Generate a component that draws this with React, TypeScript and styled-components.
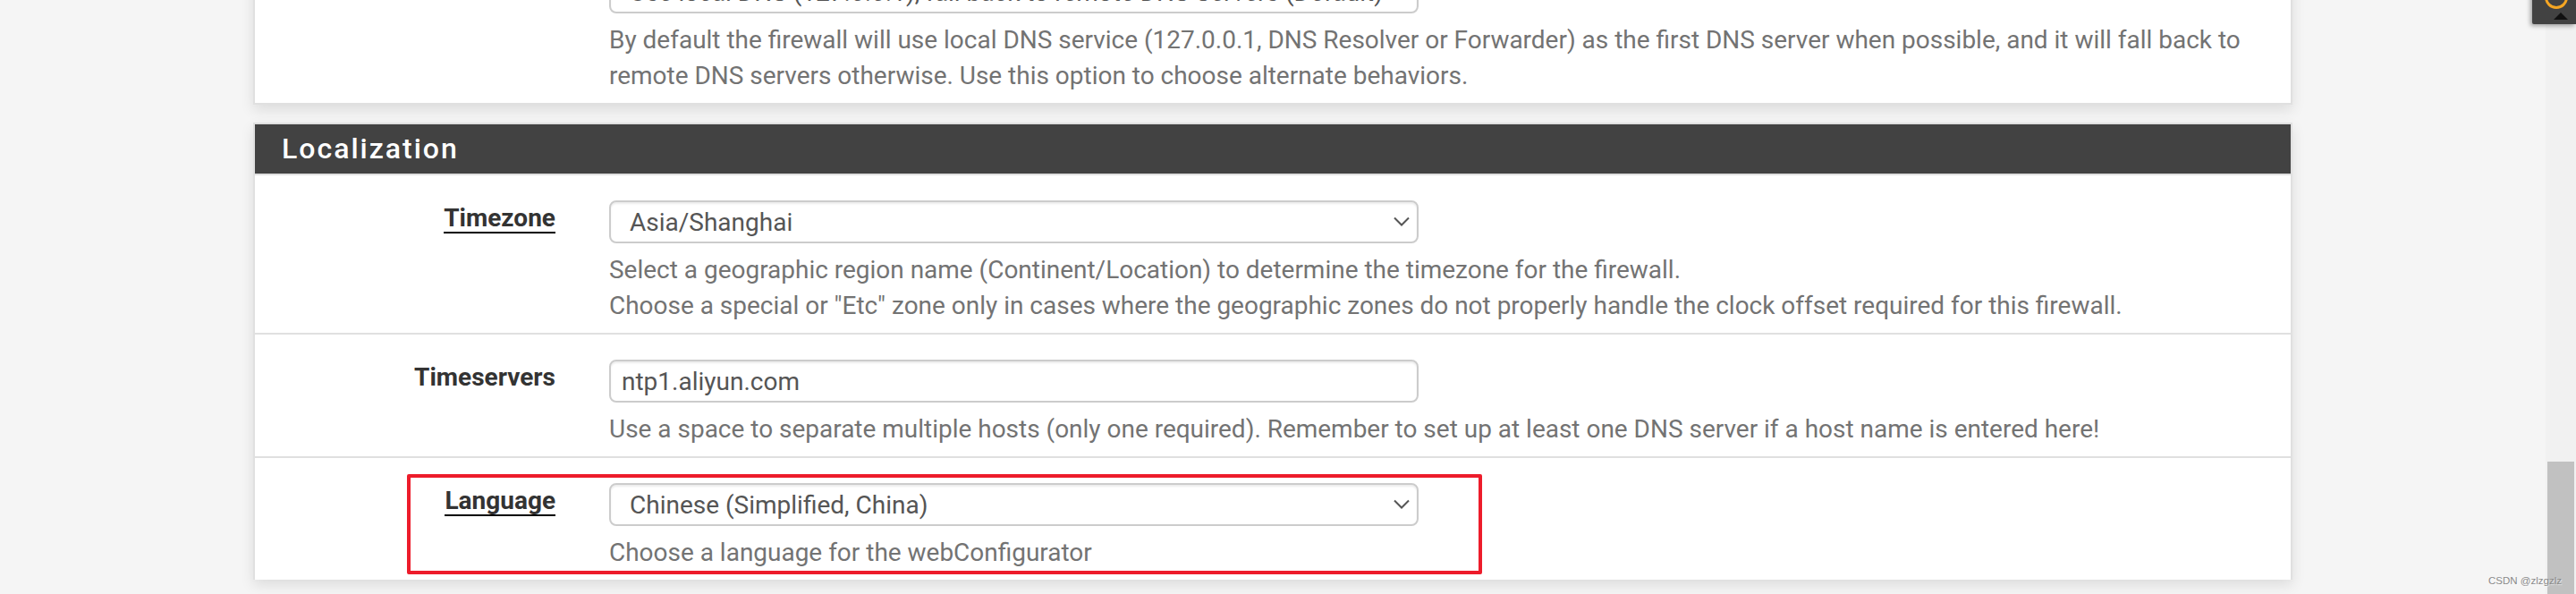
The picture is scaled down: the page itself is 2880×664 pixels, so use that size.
import React from "react"
import styled, { createGlobalStyle } from "styled-components"

type FieldProps = {
  label: string
  hint?: boolean
  marked?: boolean
  children: React.ReactNode
}

const GlobalStyle = createGlobalStyle`
  html, body {
    margin: 0;
    height: 664px;
    overflow: hidden;
    background: #f5f5f5;
    font-family: Roboto, "Liberation Sans", sans-serif;
  }
`

const Field = ({ label, hint, marked, children }: FieldProps) => (
  <Row>
    <LabelCell>
      <LabelText $hint={hint}>{label}</LabelText>
    </LabelCell>
    <FieldCell>{children}</FieldCell>
    {marked && <Marker />}
  </Row>
)

const Select = ({ value }: { value: string }) => (
  <SelectWrap>
    <SelectBox defaultValue={value}>
      <option>{value}</option>
    </SelectBox>
    <Caret viewBox="0 0 18 11" aria-hidden="true">
      <polyline points="1,1.5 9,9.5 17,1.5" />
    </Caret>
  </SelectWrap>
)

const App = () => (
  <Page>
    <GlobalStyle />
    <Content>
      <CutPanel>
        <CutRow>
          <FieldCell>
            <Select value="Use local DNS (127.0.0.1), fall back to remote DNS Servers (Default)" />
            <Help>
              By default the firewall will use local DNS service (127.0.0.1, DNS Resolver or Forwarder) as the first DNS
              server when possible, and it will fall back to
              <br />
              remote DNS servers otherwise. Use this option to choose alternate behaviors.
            </Help>
          </FieldCell>
        </CutRow>
      </CutPanel>
      <Panel>
        <Heading>Localization</Heading>
        <Field label="Timezone" hint>
          <Select value="Asia/Shanghai" />
          <Help>
            Select a geographic region name (Continent/Location) to determine the timezone for the firewall.
            <br />
            Choose a special or "Etc" zone only in cases where the geographic zones do not properly handle the clock
            offset required for this firewall.
          </Help>
        </Field>
        <Field label="Timeservers">
          <TextInput readOnly defaultValue="ntp1.aliyun.com" />
          <Help>
            Use a space to separate multiple hosts (only one required). Remember to set up at least one DNS server if a
            host name is entered here!
          </Help>
        </Field>
        <Field label="Language" hint marked>
          <Select value="Chinese (Simplified, China)" />
          <Help>Choose a language for the webConfigurator</Help>
        </Field>
      </Panel>
    </Content>
    <Rail>
      <Thumb />
    </Rail>
    <HelpTab>
      <Ring />
      <Arrow />
    </HelpTab>
    <Watermark>CSDN @zlzgzlz</Watermark>
  </Page>
)

export default App

const Page = styled.div`
  position: relative;
  display: flex;
  height: 664px;
  overflow: hidden;
`

const Content = styled.main`
  flex: 1;
  min-width: 0;
  padding: 0 283px;
  display: flex;
  flex-direction: column;
  gap: 20px;
`

const Panel = styled.section`
  background: #fff;
  border: 2px solid #e0e0e0;
  border-bottom: 0;
  box-shadow: 0 6px 14px rgba(0, 0, 0, 0.1);
`

const CutPanel = styled(Panel)`
  margin-top: -35px;
  border-top: 0;
  border-bottom: 2px solid #e0e0e0;
`

const CutRow = styled.div`
  display: grid;
  grid-template-columns: 396px 1fr;
  padding-top: 2px;

  & > div {
    grid-column: 2;
  }
`

const Heading = styled.h2`
  margin: 0;
  height: 55px;
  padding-left: 30px;
  background: #424242;
  border-bottom: 2px solid #e0e0e0;
  color: #fff;
  font-size: 32px;
  font-weight: 500;
  line-height: 55px;
  letter-spacing: 2px;
`

const Row = styled.div`
  position: relative;
  display: grid;
  grid-template-columns: 396px 1fr;
  padding-top: 28px;
  border-bottom: 2px solid #e0e0e0;

  &:last-child {
    border-bottom: 0;
  }
`

const LabelCell = styled.div`
  padding: 5px 60px 0 0;
  text-align: right;
`

const LabelText = styled.span<{ $hint?: boolean }>`
  color: #333;
  font-size: 28px;
  font-weight: 700;
  line-height: 30px;
  display: inline-block;
  border-bottom: ${({ $hint }) => ($hint ? "2px solid #000" : "0")};
`

const FieldCell = styled.div`
  min-width: 0;
`

const SelectWrap = styled.div`
  position: relative;
  width: 905px;
  height: 48px;
`

const SelectBox = styled.select`
  display: block;
  appearance: none;
  box-sizing: border-box;
  width: 100%;
  height: 100%;
  padding: 0 40px 0 21px;
  background: #fff;
  border: 2px solid #ccc;
  border-radius: 8px;
  box-shadow: inset 0 2px 2px rgba(0, 0, 0, 0.075);
  color: #555;
  font: 400 28px Roboto, "Liberation Sans", sans-serif;
`

const Caret = styled.svg`
  position: absolute;
  top: 18px;
  right: 10px;
  width: 18px;
  height: 11px;
  fill: none;
  stroke: #555;
  stroke-width: 2;
`

const TextInput = styled.input`
  display: block;
  box-sizing: border-box;
  width: 905px;
  height: 48px;
  padding: 0 12px;
  background: #fff;
  border: 2px solid #ccc;
  border-radius: 8px;
  box-shadow: inset 0 2px 2px rgba(0, 0, 0, 0.075);
  color: #555;
  font: 400 28px Roboto, "Liberation Sans", sans-serif;
`

const Help = styled.div`
  padding: 10px 0;
  color: #737373;
  font-size: 27.97px;
  line-height: 40px;
  white-space: nowrap;
`

const Marker = styled.div`
  position: absolute;
  top: 18px;
  left: 170px;
  width: 1202px;
  height: 112px;
  box-sizing: border-box;
  border: 4px solid #ed1c2b;
  border-radius: 2px;
  pointer-events: none;
`

const Rail = styled.div`
  flex: none;
  width: 34px;
  display: flex;
  flex-direction: column;
  justify-content: flex-end;
  background: #f1f1f1;
`

const Thumb = styled.div`
  height: 148px;
  margin: 0 2px;
  background: #c1c1c1;
`

const HelpTab = styled.div`
  position: absolute;
  top: -14px;
  right: 0;
  width: 49px;
  height: 41px;
  background: #424242;
  box-shadow: -2px 2px 5px rgba(0, 0, 0, 0.35);
  border-bottom-left-radius: 2px;
`

const Ring = styled.div`
  position: absolute;
  left: 14px;
  top: -2px;
  width: 26px;
  height: 26px;
  box-sizing: border-box;
  border: 3px solid #f5a623;
  border-radius: 50%;
`

const Arrow = styled.div`
  position: absolute;
  left: 24px;
  bottom: 5px;
  width: 0;
  height: 0;
  border-left: 8px solid transparent;
  border-right: 8px solid transparent;
  border-bottom: 8px solid #111;
`

const Watermark = styled.div`
  position: absolute;
  right: 16px;
  bottom: 9px;
  color: #8a8a8a;
  font: 400 11.5px "Liberation Sans", sans-serif;
  text-shadow: 1px 1px 1px rgba(255, 255, 255, 0.6);
`
